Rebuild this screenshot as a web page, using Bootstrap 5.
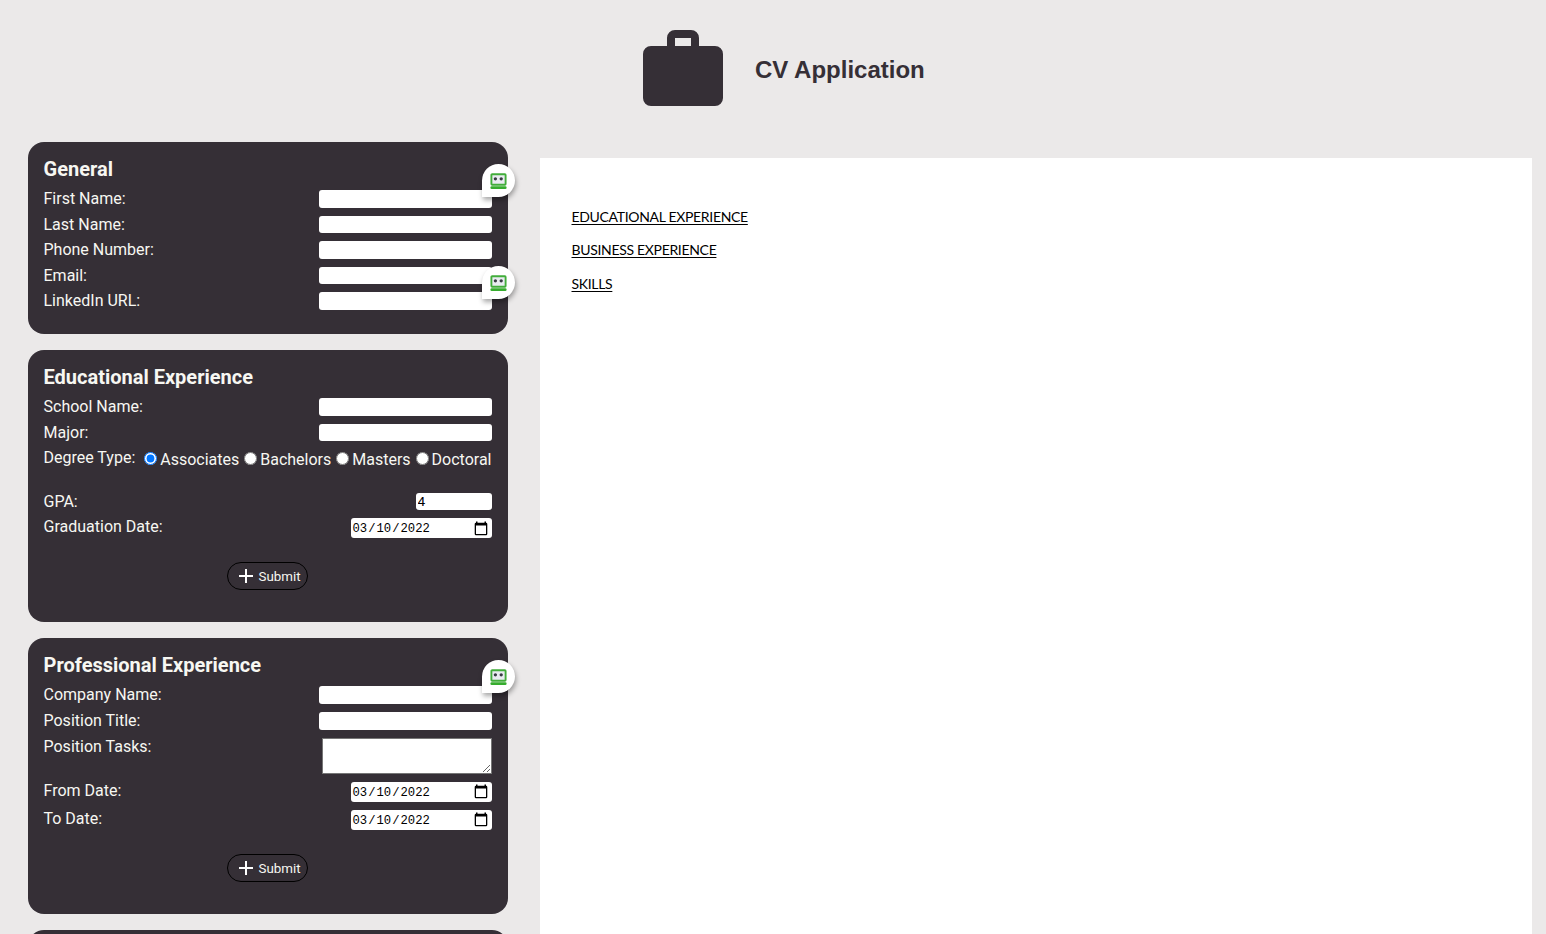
<!DOCTYPE html>
<html lang="en">
<head>
<meta charset="utf-8">
<title>CV Application</title>
<link href="https://cdn.jsdelivr.net/npm/bootstrap@5.3.0/dist/css/bootstrap.min.css" rel="stylesheet">
<style>
body{background:#ebe9e9;color:#352f36;font:16px/20px Roboto,sans-serif;height:934px;overflow:hidden}
.app-head{height:142px;padding:30px 0 0 643px;gap:32px}
.app-head h1{font:bold 24px/28px "Liberation Sans",sans-serif;margin:26px 0 0}
main{height:792px;overflow:hidden;padding-left:28px}
.side{width:480px;gap:16px}
.panel{background:#352f36;color:#f7f7f2;border-radius:16px;padding:16px 16px 16px 15.5px}
.panel h2{font-size:20px;font-weight:700;line-height:22px;margin:0 0 10px}
.line{height:17.5px;margin-bottom:8px}
.line>label{line-height:17px;white-space:nowrap}
.line.degree{height:35.5px}
.line.title{height:18px}
.line.title .txt{height:18px}
.line.tasks{height:36px}
.line.when{height:20px}
.txt{width:173px;height:17.5px;border:0;border-radius:3px;background:#fff;padding:0 2px;font:13.6px/17px Roboto,sans-serif;color:#000}
.txt.gpa{width:76px;padding:0 1.5px 1px}
.area{width:170px;height:36px;border:1px solid #767676;border-radius:0;padding:2px;resize:both;background:#fff}
.date-box{width:141px;height:20px;border-radius:3px;background:#fff;color:#000;padding:0 4px 0 .5px;font:12.22px/18px "Liberation Mono",monospace}
.date-box span{padding-top:2px}
.date-box i{font-style:normal;padding:0 1px}
.opts{line-height:20px;gap:5px;margin-right:.5px;white-space:nowrap}
.opts label{height:20px;padding-top:2px}
.opts input{width:13px;height:13px;margin:-4px 3px 0 0}
.add{width:81px;height:28px;border:1px solid #000;border-radius:14px;background:transparent;color:#f7f7f2;font:13.33px/16px Roboto,sans-serif;padding:0 6px 0 11px;gap:5.5px;margin:24px 0 0 183.5px}
.add span{padding-top:2px}
.s-general{height:192px}.s-edu{height:272px}.s-pro{height:276px}.s-skill{height:120px}
.pin{left:163px;top:-26px;width:33px;height:33px;padding:1px 0 0 .5px;background:#fff;border-radius:50% 50% 50% 0;box-shadow:1px 3px 5px rgba(0,0,0,.35);z-index:2}
.sheet{margin:16px 14px 0 32px;padding:49px 31.5px;height:776px;background:#fff;color:#000;font:14px/20px Lato,sans-serif;letter-spacing:-.32px}
.sheet p{margin:0 0 13.4px;text-decoration:underline;text-underline-offset:2px;text-decoration-thickness:1px}
</style>
<script src="https://cdn.jsdelivr.net/npm/bootstrap@5.3.0/dist/js/bootstrap.bundle.min.js"></script>
</head>
<body>
<svg class="d-none">
<symbol id="robo" viewBox="0 0 17 17"><rect x="1.4" y="1.2" width="14.2" height="10.6" rx=".7" fill="#e9ebf1" stroke="#42ad3b" stroke-width="1.9"/><circle cx="5.4" cy="5.8" r="1.65" fill="#383b43"/><circle cx="11.2" cy="5.8" r="1.65" fill="#383b43"/><rect x=".4" y="13.3" width="16.2" height="2.8" rx="1.3" fill="#36ac2e"/></symbol>
<symbol id="cal" viewBox="0 0 14 15"><path d="M2 .5h1.500v1.300h7V.5H12v1.300a1.300 1.300 0 0 1 1.300 1.300V13a1.300 1.300 0 0 1-1.300 1.300H2A1.300 1.300 0 0 1 .7 13V3.100A1.300 1.300 0 0 1 2 1.800zM2 4.500V13h10V4.500z" fill="#000" fill-rule="evenodd"/></symbol>
<symbol id="plus" viewBox="0 0 14 14"><path d="M6 0h2v6h6v2H8v6H6V8H0V6h6z" fill="#fff"/></symbol>
</svg>
<header class="app-head d-flex align-items-start">
<svg width="80" height="76" viewBox="0 0 80 76"><path d="M24 16V8a8 8 0 0 1 8-8h16a8 8 0 0 1 8 8v8h16a8 8 0 0 1 8 8v44a8 8 0 0 1-8 8H8a8 8 0 0 1-8-8V24a8 8 0 0 1 8-8zM32 8v8h16V8z" fill="#352f36" fill-rule="evenodd"/></svg>
<h1>CV Application</h1>
</header>
<main class="d-flex align-items-start">
<div class="side d-flex flex-column flex-shrink-0">
<section class="panel s-general">
<h2>General</h2>
<div class="line d-flex justify-content-between"><label>First Name:</label><div class="position-relative"><input class="txt d-block"><span class="pin position-absolute d-flex align-items-center justify-content-center"><svg width="17" height="17"><use href="#robo"/></svg></span></div></div>
<div class="line d-flex justify-content-between"><label>Last Name:</label><input class="txt"></div>
<div class="line d-flex justify-content-between"><label>Phone Number:</label><input class="txt"></div>
<div class="line d-flex justify-content-between"><label>Email:</label><input class="txt"></div>
<div class="line d-flex justify-content-between"><label>LinkedIn URL:</label><div class="position-relative"><input class="txt d-block"><span class="pin position-absolute d-flex align-items-center justify-content-center"><svg width="17" height="17"><use href="#robo"/></svg></span></div></div>
</section>
<section class="panel s-edu">
<h2>Educational Experience</h2>
<div class="line d-flex justify-content-between"><label>School Name:</label><input class="txt"></div>
<div class="line d-flex justify-content-between"><label>Major:</label><input class="txt"></div>
<div class="line degree d-flex justify-content-between"><label>Degree Type:</label>
<div class="opts d-flex"><label class="d-flex align-items-center"><input type="radio" name="degree" checked>Associates</label><label class="d-flex align-items-center"><input type="radio" name="degree">Bachelors</label><label class="d-flex align-items-center"><input type="radio" name="degree">Masters</label><label class="d-flex align-items-center"><input type="radio" name="degree">Doctoral</label></div></div>
<div class="line d-flex justify-content-between"><label>GPA:</label><input class="txt gpa" value="4"></div>
<div class="line when d-flex justify-content-between"><label>Graduation Date:</label><div class="date-box d-flex align-items-center justify-content-between"><span><i>03</i>/<i>10</i>/<i>2022</i></span><svg width="14" height="15"><use href="#cal"/></svg></div></div>
<button class="add d-flex align-items-center"><svg width="14" height="14"><use href="#plus"/></svg><span>Submit</span></button>
</section>
<section class="panel s-pro">
<h2>Professional Experience</h2>
<div class="line d-flex justify-content-between"><label>Company Name:</label><div class="position-relative"><input class="txt d-block"><span class="pin position-absolute d-flex align-items-center justify-content-center"><svg width="17" height="17"><use href="#robo"/></svg></span></div></div>
<div class="line title d-flex justify-content-between"><label>Position Title:</label><input class="txt"></div>
<div class="line tasks d-flex justify-content-between"><label>Position Tasks:</label><textarea class="area"></textarea></div>
<div class="line when d-flex justify-content-between"><label>From Date:</label><div class="date-box d-flex align-items-center justify-content-between"><span><i>03</i>/<i>10</i>/<i>2022</i></span><svg width="14" height="15"><use href="#cal"/></svg></div></div>
<div class="line when d-flex justify-content-between"><label>To Date:</label><div class="date-box d-flex align-items-center justify-content-between"><span><i>03</i>/<i>10</i>/<i>2022</i></span><svg width="14" height="15"><use href="#cal"/></svg></div></div>
<button class="add d-flex align-items-center"><svg width="14" height="14"><use href="#plus"/></svg><span>Submit</span></button>
</section>
<section class="panel s-skill"></section>
</div>
<article class="sheet flex-grow-1">
<p>EDUCATIONAL EXPERIENCE</p>
<p>BUSINESS EXPERIENCE</p>
<p>SKILLS</p>
</article>
</main>
</body>
</html>
